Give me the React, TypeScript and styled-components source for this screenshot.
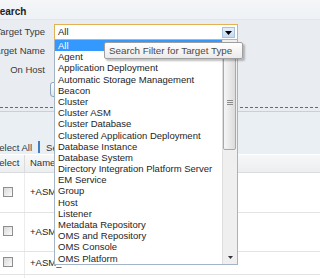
import styled, { createGlobalStyle } from "styled-components";

const GlobalStyle = createGlobalStyle`
  html, body {
    margin: 0;
    padding: 0;
    background: #e9edf2;
  }
  body {
    font-family: "Liberation Sans", Arial, sans-serif;
    font-size: 9.5px;
    color: #222;
  }
`;

const targetTypes = [
  "All",
  "Agent",
  "Application Deployment",
  "Automatic Storage Management",
  "Beacon",
  "Cluster",
  "Cluster ASM",
  "Cluster Database",
  "Clustered Application Deployment",
  "Database Instance",
  "Database System",
  "Directory Integration Platform Server",
  "EM Service",
  "Group",
  "Host",
  "Listener",
  "Metadata Repository",
  "OMS and Repository",
  "OMS Console",
  "OMS Platform",
];

const results = [
  { name: "+ASM", height: 40 },
  { name: "+ASM", height: 39 },
  { name: "+ASM_", height: 23 },
  { name: "+ASM", height: 23 },
];

function App() {
  return (
    <Page>
      <GlobalStyle />
      <Header>
        <Title>Search</Title>
      </Header>

      <Form>
        <Label>Target Type</Label>
        <SelectWrap>
          <SelectBox>
            All
            <DropButton>
              <svg width="7" height="4" viewBox="0 0 7 4">
                <path d="M0 0h7L3.5 4z" fill="#000" />
              </svg>
            </DropButton>
          </SelectBox>

          <DropList>
            <Options>
              {targetTypes.map((t, i) => (
                <Option key={t} selected={i === 0}>
                  {t}
                </Option>
              ))}
            </Options>
            <ScrollBar>
              <ScrollArrow>
                <svg width="5" height="3" viewBox="0 0 5 3">
                  <path d="M0 3h5L2.5 0z" fill="#333" />
                </svg>
              </ScrollArrow>
              <Thumb>
                <Grip />
                <Grip />
                <Grip />
              </Thumb>
              <Track />
              <ScrollArrow>
                <svg width="5" height="3" viewBox="0 0 5 3">
                  <path d="M0 0h5L2.5 3z" fill="#333" />
                </svg>
              </ScrollArrow>
            </ScrollBar>
          </DropList>

          <Tooltip>Search Filter for Target Type</Tooltip>
        </SelectWrap>

        <Label>Target Name</Label>
        <TextInput />

        <Label>On Host</Label>
        <TextInput />

        <span />
        <ButtonCell>
          <SmallButton>Clear</SmallButton>
        </ButtonCell>
      </Form>

      <DashedRule />

      <ResultsPanel>
        <Toolbar>
          <ToolLink>Select All</ToolLink>
          <ToolSep />
          <ToolLink>Select None</ToolLink>
        </Toolbar>
      </ResultsPanel>

      <Table>
        <HeadRow>
          <SelectCell>Select</SelectCell>
          <NameCell>Name</NameCell>
        </HeadRow>
        {results.map((r, i) => (
          <BodyRow key={i} h={r.height}>
            <SelectCell>
              <CheckBox />
            </SelectCell>
            <NameCell>{r.name}</NameCell>
          </BodyRow>
        ))}
      </Table>
    </Page>
  );
}

export default App;

const Page = styled.div`
  position: relative;
  width: 320px;
  height: 278px;
  overflow: hidden;
`;

const Header = styled.div`
  height: 19px;
  border-bottom: 1px solid #e2e7ed;
  background: linear-gradient(#f4f6f8, #eef1f5);
`;

const Title = styled.div`
  margin-left: -7px;
  padding-top: 4px;
  font-size: 10px;
  font-weight: bold;
  line-height: 16px;
  color: #222;
`;

const Form = styled.div`
  display: grid;
  grid-template-columns: 55px 184px;
  grid-auto-rows: 16px;
  column-gap: 9px;
  row-gap: 3px;
  margin-left: -10px;
  padding: 4px 0 10px;
`;

const Label = styled.div`
  text-align: right;
  white-space: nowrap;
  line-height: 16px;
  color: #3a3a3a;
`;

const SelectWrap = styled.div`
  position: relative;
  z-index: 5;
`;

const SelectBox = styled.div`
  position: relative;
  box-sizing: border-box;
  height: 16px;
  padding-left: 3px;
  border: 1px solid #e2b153;
  background: #fff;
  line-height: 14px;
  color: #222;
`;

const DropButton = styled.div`
  position: absolute;
  top: 2px;
  right: 2px;
  box-sizing: border-box;
  width: 13px;
  height: 11px;
  display: flex;
  align-items: center;
  justify-content: center;
  border: 1px solid #a9c1da;
  background: linear-gradient(#e4eefa, #c5daf1);
`;

const DropList = styled.div`
  position: absolute;
  top: 16px;
  left: 0;
  box-sizing: border-box;
  width: 184px;
  height: 225px;
  display: flex;
  border: 1px solid #a3b4c7;
  border-top: none;
  background: #fff;
`;

const Options = styled.div`
  flex: 1;
  overflow: hidden;
`;

const Option = styled.div<{ selected?: boolean }>`
  height: 11.2px;
  padding-left: 3px;
  line-height: 11.2px;
  white-space: nowrap;
  color: ${(p) => (p.selected ? "#fff" : "#1e1e1e")};
  background: ${(p) => (p.selected ? "#3399ff" : "transparent")};
`;

const ScrollBar = styled.div`
  width: 14px;
  display: flex;
  flex-direction: column;
  background: #efefef;
  border-left: 1px solid #dedede;
`;

const ScrollArrow = styled.div`
  height: 13px;
  display: flex;
  align-items: center;
  justify-content: center;
`;

const Thumb = styled.div`
  box-sizing: border-box;
  height: 96px;
  margin: 1px 1px 0 0;
  display: flex;
  flex-direction: column;
  align-items: center;
  justify-content: center;
  gap: 1px;
  border: 1px solid #a8a8a8;
  border-radius: 2px;
  background: linear-gradient(to right, #f6f6f6, #dcdcdc);
`;

const Grip = styled.div`
  width: 6px;
  height: 1px;
  background: #8c8c8c;
`;

const Track = styled.div`
  flex: 1;
`;

const Tooltip = styled.div`
  position: absolute;
  top: 18px;
  left: 50px;
  z-index: 6;
  box-sizing: border-box;
  width: 139px;
  height: 17px;
  padding-left: 4px;
  border: 1px solid #9f9f9f;
  border-radius: 2px;
  background: linear-gradient(#ffffff, #ebebeb);
  box-shadow: 2px 2px 2px rgba(0, 0, 0, 0.25);
  font-size: 9.8px;
  line-height: 15px;
  color: #4a4a4a;
  white-space: nowrap;
`;

const TextInput = styled.div`
  box-sizing: border-box;
  width: 150px;
  height: 16px;
  border: 1px solid #9aa9b8;
  background: #fff;
`;

const ButtonCell = styled.div`
  display: flex;
  align-items: flex-end;
`;

const SmallButton = styled.div`
  margin-left: -4px;
  padding: 0 8px;
  height: 13px;
  border: 1px solid #8ea3ba;
  border-radius: 3px;
  background: linear-gradient(#ffffff, #dde5ee);
  line-height: 13px;
  color: #222;
`;

const DashedRule = styled.div`
  height: 1px;
  margin-bottom: 3px;
  background: repeating-linear-gradient(
    to right,
    #6a6a6a 0 3px,
    transparent 3px 5px
  );
`;

const ResultsPanel = styled.div`
  height: 42px;
  display: flex;
  align-items: flex-end;
  border-top: 1px solid #c6d1dd;
  background: #eaeff4;
`;

const Toolbar = styled.div`
  height: 14px;
  margin-left: -7px;
  display: flex;
  align-items: center;
  gap: 5px;
`;

const ToolLink = styled.span`
  color: #2e3a47;
  white-space: nowrap;
`;

const ToolSep = styled.span`
  width: 2px;
  height: 12px;
  margin: 0 1px;
  background: #3d7fc2;
`;

const Table = styled.div`
  margin-left: -10px;
  border-top: 1px solid #fff;
  background: #fff;
`;

const HeadRow = styled.div`
  height: 17px;
  display: flex;
  border-bottom: 1px solid #dadde0;
  background: linear-gradient(#f6f7f8, #eceef0);
  line-height: 17px;
  color: #333;
`;

const BodyRow = styled.div<{ h: number }>`
  box-sizing: border-box;
  height: ${(p) => p.h}px;
  display: flex;
  align-items: stretch;
  border-bottom: 1px solid #e3e3e3;
`;

const SelectCell = styled.div`
  box-sizing: border-box;
  width: 35px;
  padding: 0 0 2px 3px;
  display: flex;
  align-items: center;
  border-right: 1px solid #dcdcdc;
  white-space: nowrap;
  ${BodyRow} & {
    padding-left: 13px;
    border-right-color: #ececec;
  }
`;

const NameCell = styled.div`
  padding: 0 0 2px 5px;
  display: flex;
  align-items: center;
  white-space: nowrap;
`;

const CheckBox = styled.div`
  box-sizing: border-box;
  width: 10px;
  height: 10px;
  border: 1px solid #8d8e8f;
  background: linear-gradient(135deg, #d9d9d9, #fbfbfb);
`;
